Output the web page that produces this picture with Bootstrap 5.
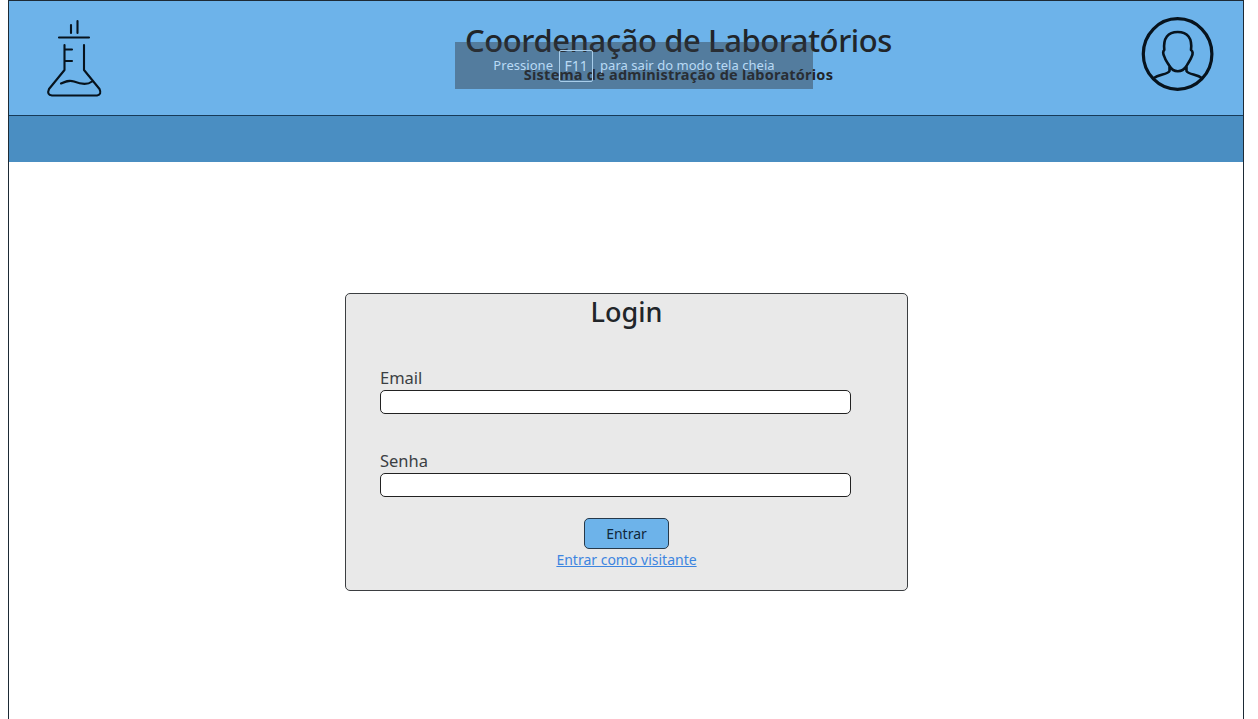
<!DOCTYPE html>
<html lang="pt-BR">
<head>
<meta charset="utf-8">
<meta name="viewport" content="width=device-width, initial-scale=1">
<title>Coordenação de Laboratórios</title>
<link href="https://cdn.jsdelivr.net/npm/bootstrap@5.3.0/dist/css/bootstrap.min.css" rel="stylesheet">
<style>
body{font-family:"Noto Sans","Open Sans",sans-serif;color:#212529;height:719px;overflow:hidden}
.page-frame{width:1236px;height:740px;margin-left:8px;border:1px solid #1d2a35}
.top-header{height:115px;background:#6db3ea;border-bottom:1px solid #173a58}
.flask-logo{margin:17px 0 0 34px}
.user-logo{margin:15px 28px 0 0}
.title-area{width:430px;margin-left:111px}
.title-area h1{font-size:31px;line-height:38px;margin-top:20px;font-weight:500;letter-spacing:-.42px;white-space:nowrap}
.title-area p{font-size:14.5px;line-height:20px;margin-top:5px;font-weight:700;letter-spacing:.22px;white-space:nowrap}
.menu-bar{height:46px;background:#4a8ec2}
.login-box{width:563px;height:298px;margin:131px 0 0 336px;background:#e9e9e9;border:1px solid #3b3e41;border-radius:5px}
.login-box h2{font-size:27px;line-height:34px;padding-top:1px;margin-bottom:1px;font-weight:500}
.login-form{padding:0 56px 0 34px}
.login-form label{font-size:16.5px;line-height:24px;color:#3b3f43}
.login-form .second-field{margin-top:-1px}
.field-input{height:24px;border:1px solid #222;border-radius:5px;padding:0 6px}
.login-actions{margin-top:21px}
.btn-enter{width:85px;height:31px;font-size:14px;line-height:1;padding:0;background:#6db3ea;border:1px solid #26394a;border-radius:5px;color:#10273a}
.visitor-link{font-size:14px;line-height:22px;color:#3d85e0}
.fs-toast{left:455px;top:42px;width:358px;height:47px;background:rgba(50,58,66,.45);color:#b9daf5;font-size:13px;white-space:nowrap}
.fs-toast span{letter-spacing:.04px}
.fs-toast kbd{font:inherit;font-size:14px;color:inherit;background:none;border:1px solid #a8cdea;border-radius:2px;width:34px;height:32px;line-height:29px;padding:0;text-align:center;margin:0 7px 0 6px}
</style>
</head>
<body>
<div class="page-frame">
  <header class="top-header d-flex justify-content-between align-items-start">
    <svg class="flask-logo" width="62" height="82" viewBox="43 18 62 82" fill="none" stroke="#07131d" stroke-width="2.1" stroke-linecap="round" stroke-linejoin="round">
      <path d="M71 25v8M77.500 21v12M59 37.500h30M64.500 45v25L49 89q-2.500 6 3 6.500h45q5-1 2.500-6.500L84 70V45M65 49.500h7M65 61h7M61 83.500c4-2 8-4 13-2s13 4 18 0"/>
    </svg>
    <div class="title-area text-center">
      <h1 class="mb-0">Coordenação de Laboratórios</h1>
      <p class="mb-0">Sistema de administração de laboratórios</p>
    </div>
    <svg class="user-logo" width="74" height="76" viewBox="1141 16 74 76" fill="none" stroke="#07131d" stroke-width="2.600" stroke-linejoin="round">
      <ellipse cx="1177.600" cy="54" rx="34.300" ry="35.300" stroke-width="3.200"/>
      <path d="M1164.300 50C1163 38 1168 32 1177.700 32S1192.500 38 1191 50Q1194 52 1191.500 57C1190 61 1188 63 1186.500 66C1182 73 1173.500 73 1169.500 66C1168 63 1165.500 61 1164.500 57Q1162 52 1164.300 50ZM1169.500 66V71Q1168.500 73 1162.500 74.500T1153 78.500M1186.500 66V71Q1187.500 73 1193.500 74.500T1202.500 78.500"/>
    </svg>
  </header>
  <nav class="menu-bar"></nav>
  <main class="login-box">
    <h2 class="text-center">Login</h2>
    <form class="login-form">
      <div class="pt-4">
        <label class="d-block mt-2 pt-1" for="email">Email</label>
        <input class="field-input d-block w-100" type="email" id="email">
      </div>
      <div class="pt-4 second-field">
        <label class="d-block mt-2 pt-1" for="senha">Senha</label>
        <input class="field-input d-block w-100" type="password" id="senha">
      </div>
    </form>
    <div class="login-actions d-flex flex-column align-items-center">
      <button class="btn btn-enter" type="button">Entrar</button>
      <a class="visitor-link" href="#">Entrar como visitante</a>
    </div>
  </main>
</div>
<div class="fs-toast position-absolute d-flex align-items-center justify-content-center">
  <span>Pressione</span><kbd>F11</kbd><span>para sair do modo tela cheia</span>
</div>
</body>
</html>
